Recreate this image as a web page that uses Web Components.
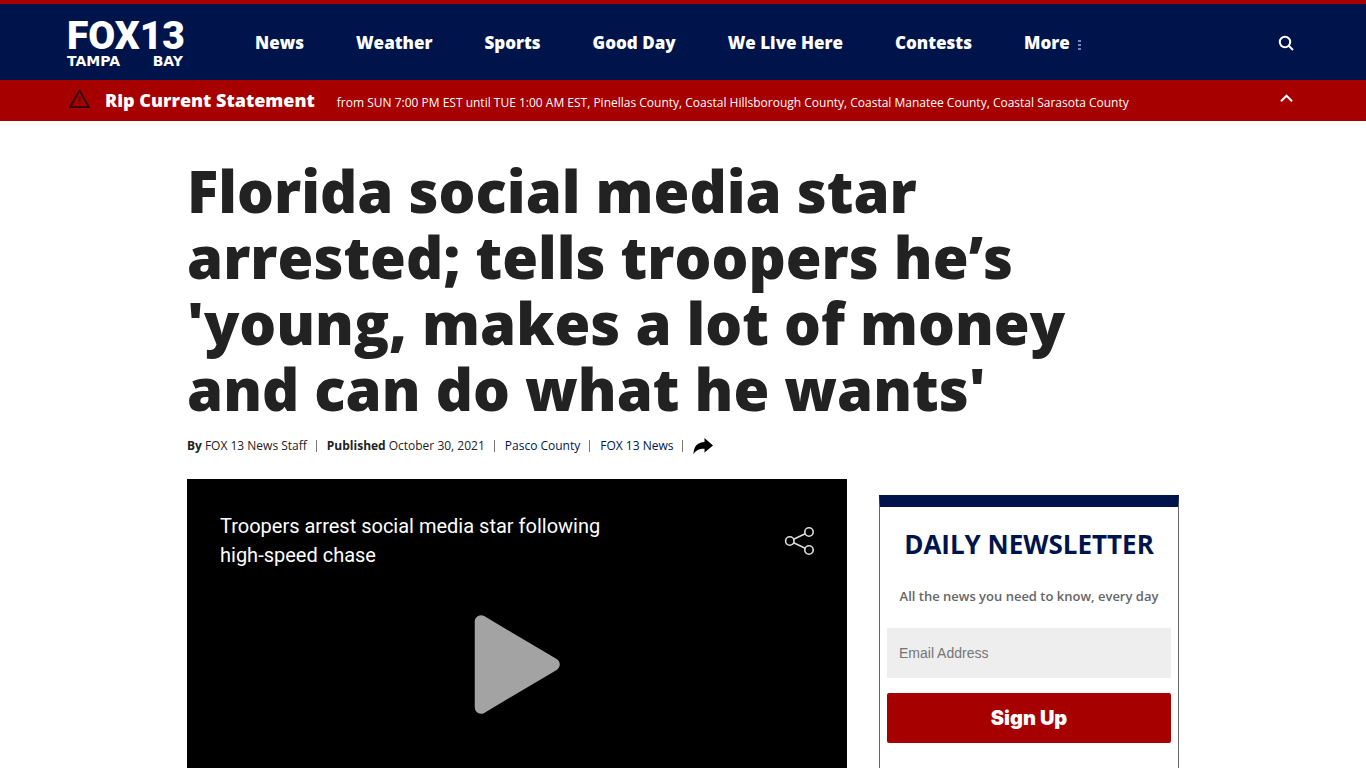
<!DOCTYPE html>
<html lang="en">
<head>
<meta charset="utf-8">
<meta name="viewport" content="width=device-width, initial-scale=1">
<title>Florida social media star arrested | FOX 13 Tampa Bay</title>
<style>
  body {
    margin: 0;
    background: #fff;
    color: #222;
    font-family: "Open Sans", sans-serif;
    --navy: #00144c;
    --red: #a60000;
  }
</style>
</head>
<body>
<site-header>
  <nav-link href="#news">News</nav-link>
  <nav-link href="#weather">Weather</nav-link>
  <nav-link href="#sports">Sports</nav-link>
  <nav-link href="#good-day">Good Day</nav-link>
  <nav-link href="#we-live-here">We Live Here</nav-link>
  <nav-link href="#contests">Contests</nav-link>
  <nav-link href="#more" more>More</nav-link>
</site-header>
<alert-bar>
  <span slot="title">Rip Current Statement</span>
  from SUN 7:00 PM EST until TUE 1:00 AM EST, Pinellas County, Coastal Hillsborough County, Coastal Manatee County, Coastal Sarasota County
</alert-bar>
<article-page>
  <span slot="headline">Florida social media star arrested; tells troopers he’s 'young, makes a lot of money and can do what he wants'</span>
  <article-meta slot="meta"></article-meta>
  <video-player>Troopers arrest social media star following high-speed chase</video-player>
  <newsletter-box slot="side">
    <span slot="title">Daily Newsletter</span>
    All the news you need to know, every day
  </newsletter-box>
</article-page>

<script>
class SiteLogo extends HTMLElement {
  constructor() {
    super();
    this.attachShadow({ mode: "open" });
    this.shadowRoot.innerHTML = `
      <style>
        :host { display: block; width: 116px; }
        a {
          display: block;
          color: #fff;
          text-decoration: none;
          white-space: nowrap;
        }
        .station, .market {
          display: flex;
          justify-content: space-between;
        }
        .station {
          font: 900 39px/36px Roboto, sans-serif;
        }
        .market {
          font: 700 14px/14px "DejaVu Sans", sans-serif;
        }
      </style>
      <a href="#home">
        <span class="station"><span>FOX</span><span>13</span></span>
        <span class="market"><span>TAMPA</span><span>BAY</span></span>
      </a>
    `;
  }
}
customElements.define("site-logo", SiteLogo);

class NavLink extends HTMLElement {
  constructor() {
    super();
    this.attachShadow({ mode: "open" });
  }
  connectedCallback() {
    const dots = this.hasAttribute("more")
      ? `<svg width="4" height="11" viewBox="0 0 4 11" aria-hidden="true">
           <path d="M0 1h3M0 5h3M0 9h3" stroke="#6f88c4" stroke-width="2"/>
         </svg>`
      : "";
    this.shadowRoot.innerHTML = `
      <style>
        :host { display: block; }
        a {
          display: flex;
          align-items: center;
          gap: 8px;
          color: #fff;
          font-size: 17px;
          font-weight: 800;
          line-height: 24px;
          text-decoration: none;
          white-space: nowrap;
        }
        svg { margin-top: 4px; }
      </style>
      <a href="${this.getAttribute("href")}"><slot></slot>${dots}</a>
    `;
  }
}
customElements.define("nav-link", NavLink);

class SiteHeader extends HTMLElement {
  constructor() {
    super();
    this.attachShadow({ mode: "open" });
    this.shadowRoot.innerHTML = `
      <style>
        :host {
          display: block;
          background: var(--navy);
          border-top: 4px solid var(--red);
        }
        header {
          box-sizing: border-box;
          display: flex;
          align-items: center;
          gap: 72px;
          max-width: 1232px;
          min-height: 76px;
          margin: 0 auto;
          padding-top: 2px;
        }
        nav {
          flex: 1;
          display: flex;
          gap: 52px;
        }
        button {
          display: flex;
          padding: 4px;
          border: 0;
          background: none;
          cursor: pointer;
        }
      </style>
      <header>
        <site-logo></site-logo>
        <nav><slot></slot></nav>
        <button type="button" aria-label="Search">
          <svg width="18" height="18" viewBox="0 0 18 18" fill="none" stroke="#fff" stroke-width="2">
            <circle cx="8" cy="8" r="5.200"/>
            <path d="M11.500 11.500L16 16"/>
          </svg>
        </button>
      </header>
    `;
  }
}
customElements.define("site-header", SiteHeader);

class AlertBar extends HTMLElement {
  constructor() {
    super();
    this.attachShadow({ mode: "open" });
    this.shadowRoot.innerHTML = `
      <style>
        :host {
          display: block;
          background: var(--red);
          color: #fff;
        }
        section {
          display: flex;
          align-items: center;
          max-width: 1232px;
          min-height: 41px;
          margin: 0 auto;
        }
        .icon { margin: 0 14px 4px 1px; }
        h2 {
          margin: 0 22px 2px 0;
          font-size: 18px;
          font-weight: 800;
          line-height: 24px;
          white-space: nowrap;
        }
        p {
          flex: 1;
          margin: 4px 0 0;
          font-size: 12px;
          line-height: 18px;
        }
        button {
          display: flex;
          padding: 4px;
          margin-bottom: 4px;
          border: 0;
          background: none;
          cursor: pointer;
        }
      </style>
      <section>
        <svg class="icon" width="23" height="20" viewBox="0 0 23 20" fill="none" stroke="#2a0000" stroke-width="1.800" stroke-linejoin="round">
          <path d="M11.500 1.500L21 18.200H2Z"/>
          <path d="M11.500 7.500v5.500M11.500 14.500v1.500" stroke="#500000" stroke-width="1.600"/>
        </svg>
        <h2><slot name="title"></slot></h2>
        <p><slot></slot></p>
        <button type="button" aria-label="Collapse alerts">
          <svg width="18" height="18" viewBox="0 0 18 18" fill="none" stroke="#fff" stroke-width="2">
            <path d="M4 11.200L9.500 5.700L15 11.200"/>
          </svg>
        </button>
      </section>
    `;
  }
}
customElements.define("alert-bar", AlertBar);

class ArticleMeta extends HTMLElement {
  constructor() {
    super();
    this.attachShadow({ mode: "open" });
    this.shadowRoot.innerHTML = `
      <style>
        :host {
          display: flex;
          flex-wrap: wrap;
          align-items: center;
          font-size: 12px;
          line-height: 20px;
        }
        span, .tag {
          display: flex;
          align-items: center;
          gap: 3px;
          margin-right: 10px;
        }
        span::after, .tag::after {
          content: "";
          width: 1px;
          height: 12px;
          margin-left: 6px;
          background: #777;
        }
        a {
          color: var(--navy);
          text-decoration: none;
        }
        button {
          display: flex;
          padding: 0;
          border: 0;
          background: none;
          cursor: pointer;
        }
      </style>
      <span><b>By</b> FOX 13 News Staff</span>
      <span><b>Published</b> October 30, 2021</span>
      <a class="tag" href="#pasco-county">Pasco County</a>
      <a class="tag" href="#fox-13-news">FOX 13 News</a>
      <button type="button" aria-label="Share">
        <svg width="20" height="18" viewBox="0 0 20 18">
          <path d="M11.500 1L20 8.500L11.500 15.500V11.800C6 11.800 2.500 13.500 0.500 17.500C0.500 9.500 4.500 5.200 11.500 5Z"/>
        </svg>
      </button>
    `;
  }
}
customElements.define("article-meta", ArticleMeta);

class ArticlePage extends HTMLElement {
  constructor() {
    super();
    this.attachShadow({ mode: "open" });
    this.shadowRoot.innerHTML = `
      <style>
        :host {
          display: block;
          max-width: 992px;
          margin: 0 auto;
          padding-top: 37px;
        }
        h1 {
          margin: 0 0 14px;
          font-size: 58px;
          font-weight: 800;
          line-height: 66px;
        }
        .columns {
          display: grid;
          grid-template-columns: minmax(0, 1fr) 300px;
          align-items: start;
          gap: 32px;
          margin-top: 23px;
        }
        aside { padding-top: 16px; }
      </style>
      <article>
        <h1><slot name="headline"></slot></h1>
        <slot name="meta"></slot>
        <div class="columns">
          <main><slot></slot></main>
          <aside><slot name="side"></slot></aside>
        </div>
      </article>
    `;
  }
}
customElements.define("article-page", ArticlePage);

class VideoPlayer extends HTMLElement {
  constructor() {
    super();
    this.attachShadow({ mode: "open" });
    this.shadowRoot.innerHTML = `
      <style>
        :host {
          box-sizing: border-box;
          display: grid;
          grid-template-rows: 1fr auto 1fr;
          aspect-ratio: 16 / 9;
          padding: 33px;
          background: #000;
          color: #fff;
        }
        .top {
          display: flex;
          align-items: flex-start;
          justify-content: space-between;
        }
        h3 {
          max-width: 420px;
          margin: 0;
          font: 400 20px/29px Roboto, sans-serif;
        }
        button {
          display: flex;
          padding: 0;
          border: 0;
          background: none;
          cursor: pointer;
        }
        .share { margin-top: 14px; }
        .play { justify-self: center; }
      </style>
      <div class="top">
        <h3><slot></slot></h3>
        <button class="share" type="button" aria-label="Share video">
          <svg width="30" height="30" viewBox="0 0 30 30" fill="none" stroke="#ddd" stroke-width="1.600">
            <circle cx="5.800" cy="15" r="4.200"/>
            <circle cx="25" cy="6" r="4.200"/>
            <circle cx="25" cy="24" r="4.200"/>
            <path d="M9.600 13.200L21.200 7.800M9.600 16.800L21.200 22.200"/>
          </svg>
        </button>
      </div>
      <button class="play" type="button" aria-label="Play">
        <svg width="86" height="100" viewBox="0 0 86 100">
          <path d="M7 6.500V92.500L79.500 49.500Z" fill="#a3a3a3" stroke="#a3a3a3" stroke-width="12.500" stroke-linejoin="round"/>
        </svg>
      </button>
    `;
  }
}
customElements.define("video-player", VideoPlayer);

class NewsletterBox extends HTMLElement {
  constructor() {
    super();
    this.attachShadow({ mode: "open" });
    this.shadowRoot.innerHTML = `
      <style>
        :host {
          box-sizing: border-box;
          display: block;
          padding: 0 7px 48px;
          border: 1px solid #666;
          border-top: 12px solid var(--navy);
          text-align: center;
        }
        h3 {
          margin: 0;
          padding: 19px 0 21px;
          color: var(--navy);
          font-size: 26px;
          font-weight: 700;
          line-height: 36px;
          text-transform: uppercase;
        }
        p {
          margin: 4px 0 22px;
          color: #666;
          font-size: 13px;
          font-weight: 600;
          line-height: 19px;
        }
        form {
          display: grid;
          gap: 15px;
        }
        input, button {
          box-sizing: border-box;
          width: 100%;
          height: 50px;
          border: 0;
        }
        input {
          padding: 0 12px;
          background: #eee;
          font: 14px "Liberation Sans", sans-serif;
        }
        input::placeholder { color: #757575; }
        button {
          border-radius: 2px;
          background: var(--red);
          color: #fff;
          font: 900 20px Inter, sans-serif;
          cursor: pointer;
        }
      </style>
      <h3><slot name="title"></slot></h3>
      <p><slot></slot></p>
      <form>
        <input type="email" aria-label="Email Address" placeholder="Email Address">
        <button type="button">Sign Up</button>
      </form>
    `;
  }
}
customElements.define("newsletter-box", NewsletterBox);
</script>
</body>
</html>
